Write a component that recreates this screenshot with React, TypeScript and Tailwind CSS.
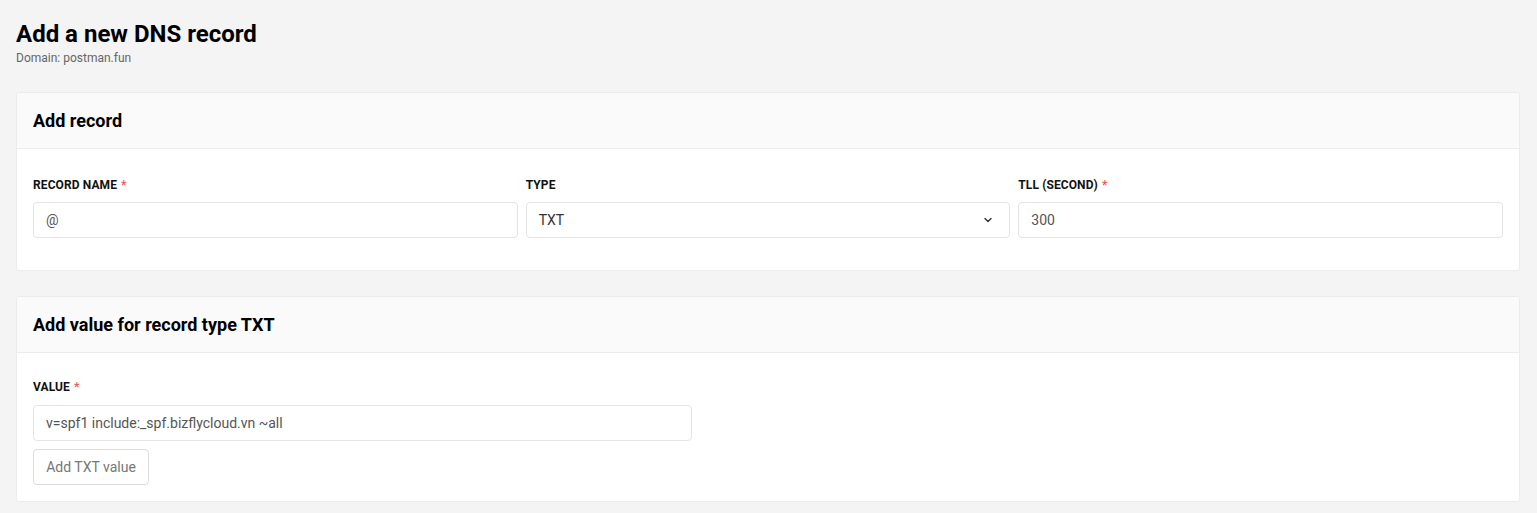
import React from "react";

function Label({ text, required, mb }: { text: string; required?: boolean; mb: string }) {
  return (
    <div className={`text-[12px] leading-[18px] font-bold uppercase text-[#111] tracking-[0.1px] ${mb}`}>
      {text}
      {required && <span className="text-[#f05a5a] ml-1">*</span>}
    </div>
  );
}

function Input({ value }: { value: string }) {
  return (
    <div className="h-9 border border-[#e4e4e4] rounded-[4px] bg-white flex items-center px-3 text-[14px] text-[#555]">
      {value}
    </div>
  );
}

export default function App() {
  return (
    <div className="min-h-[513px] bg-[#f4f4f4] pl-4 pr-[17px] pt-[18px] pb-4" style={{ fontFamily: "Roboto, 'Noto Sans', sans-serif" }}>
      <h1 className="text-[24px] leading-[32px] font-bold text-black">Add a new DNS record</h1>
      <div className="text-[12px] leading-[16px] text-[#666]">Domain: postman.fun</div>

      <div className="mt-[26px] bg-white border border-[#ececec] rounded-[3px]">
        <div className="h-[56px] bg-[#fafafa] border-b border-[#ececec] flex items-center px-4 rounded-t-[3px]">
          <h2 className="text-[18px] font-bold text-black">Add record</h2>
        </div>
        <div className="px-4 pt-[27px] pb-[32px] grid grid-cols-3 gap-2">
          <div>
            <Label text="Record name" required mb="mb-2" />
            <Input value="@" />
          </div>
          <div>
            <Label text="Type" mb="mb-2" />
            <div className="h-9 border border-[#e4e4e4] rounded-[4px] bg-white flex items-center justify-between pl-3 pr-4 text-[14px] text-[#333]">
              <span>TXT</span>
              <svg width="10" height="10" viewBox="0 0 10 10" fill="none">
                <path d="M2 3.5 L5 6.5 L8 3.5" stroke="#333" strokeWidth="1.4" strokeLinecap="round" strokeLinejoin="round" />
              </svg>
            </div>
          </div>
          <div>
            <Label text="TLL (second)" required mb="mb-2" />
            <Input value="300" />
          </div>
        </div>
      </div>

      <div className="mt-[25px] bg-white border border-[#ececec] rounded-[3px]">
        <div className="h-[56px] bg-[#fafafa] border-b border-[#ececec] flex items-center px-4 rounded-t-[3px]">
          <h2 className="text-[18px] font-bold text-black">Add value for record type TXT</h2>
        </div>
        <div className="px-4 pt-[25px] pb-4">
          <Label text="Value" required mb="mb-[9px]" />
          <div className="w-[659px]">
            <Input value="v=spf1 include:_spf.bizflycloud.vn ~all" />
          </div>
          <button className="mt-2 h-9 w-[116px] border border-[#dcdcdc] rounded-[4px] bg-white text-[14px] text-[#777]">
            Add TXT value
          </button>
        </div>
      </div>
    </div>
  );
}
